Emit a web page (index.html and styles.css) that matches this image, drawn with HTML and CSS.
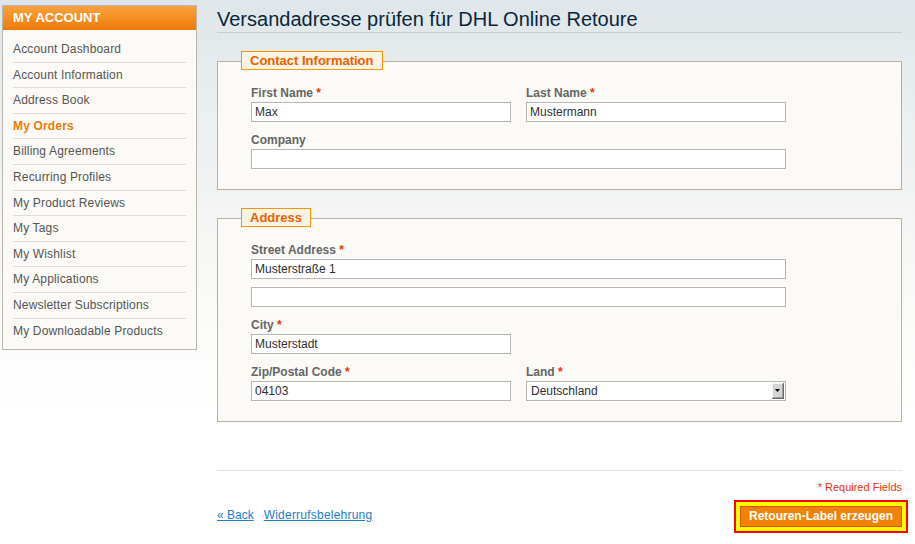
FILE: index.html
```html
<!DOCTYPE html>
<html lang="de">
<head>
<meta charset="utf-8">
<title>Versandadresse prüfen für DHL Online Retoure</title>
<link rel="stylesheet" href="styles.css">
</head>
<body>
<div class="page">
  <aside class="block-account">
    <div class="block-title">My Account</div>
    <ul class="block-content">
      <li><a href="#">Account Dashboard</a></li>
      <li><a href="#">Account Information</a></li>
      <li><a href="#">Address Book</a></li>
      <li class="current">My Orders</li>
      <li><a href="#">Billing Agreements</a></li>
      <li><a href="#">Recurring Profiles</a></li>
      <li><a href="#">My Product Reviews</a></li>
      <li><a href="#">My Tags</a></li>
      <li><a href="#">My Wishlist</a></li>
      <li><a href="#">My Applications</a></li>
      <li><a href="#">Newsletter Subscriptions</a></li>
      <li><a href="#">My Downloadable Products</a></li>
    </ul>
  </aside>
  <main class="main">
    <h1 class="page-title">Versandadresse prüfen für DHL Online Retoure</h1>

    <div class="fieldset">
      <h2 class="legend">Contact Information</h2>
      <ul class="form-list">
        <li class="fields">
          <div class="field">
            <label>First Name <em>*</em></label>
            <input class="input-text" type="text" value="Max">
          </div>
          <div class="field">
            <label>Last Name <em>*</em></label>
            <input class="input-text" type="text" value="Mustermann">
          </div>
        </li>
        <li>
          <label>Company</label>
          <input class="input-text wide" type="text" value="">
        </li>
      </ul>
    </div>

    <div class="fieldset">
      <h2 class="legend">Address</h2>
      <ul class="form-list">
        <li>
          <label>Street Address <em>*</em></label>
          <input class="input-text wide" type="text" value="Musterstraße 1">
        </li>
        <li>
          <input class="input-text wide" type="text" value="">
        </li>
        <li>
          <label>City <em>*</em></label>
          <input class="input-text" type="text" value="Musterstadt">
        </li>
        <li class="fields">
          <div class="field">
            <label>Zip/Postal Code <em>*</em></label>
            <input class="input-text" type="text" value="04103">
          </div>
          <div class="field">
            <label>Land <em>*</em></label>
            <div class="select-box">
              <select class="select">
                <option>Deutschland</option>
              </select>
              <svg class="select-arrow" width="12" height="16" viewBox="0 0 12 16" aria-hidden="true">
                <rect x="0" y="0" width="12" height="16" fill="#d4d4d4"/>
                <rect x="0" y="0" width="12" height="1" fill="#f4f4f4"/>
                <rect x="0" y="0" width="1" height="16" fill="#f4f4f4"/>
                <rect x="11" y="0" width="1" height="16" fill="#6a6a6a"/>
                <rect x="0" y="15" width="12" height="1" fill="#6a6a6a"/>
                <rect x="10" y="1" width="1" height="14" fill="#a0a0a0"/>
                <rect x="1" y="14" width="10" height="1" fill="#a0a0a0"/>
                <polygon points="3,6 8,6 5.5,9" fill="#000"/>
              </svg>
            </div>
          </div>
        </li>
      </ul>
    </div>

    <div class="buttons-set">
      <p class="required">* Required Fields</p>
      <div class="actions">
        <div class="links">
          <a href="#">« Back</a>
          <a href="#" class="wide-link">Widerrufsbelehrung</a>
        </div>
        <button class="button" type="button">Retouren-Label erzeugen</button>
      </div>
    </div>
  </main>
</div>
</body>
</html>
```

FILE: styles.css
```css
html {
  min-height: 100%;
  background: #fff;
}
body {
  margin: 0;
  min-height: 544px;
  font: 12px/1.5 "Liberation Sans", Arial, Helvetica, sans-serif;
  color: #2f2f2f;
  background: linear-gradient(180deg, #dfe6e9 0px, #e9eeee 100px, #f4f5f4 220px, #fbfbfa 330px, #ffffff 430px);
}
.page {
  display: flex;
  align-items: flex-start;
  gap: 20px;
  padding: 5px 0 0 2px;
  width: 900px;
}

/* Sidebar */
.block-account {
  flex: 0 0 195px;
  box-sizing: border-box;
  border: 1px solid #b9b6b1;
  background: #fbfaf6;
}
.block-title {
  height: 24px;
  line-height: 24px;
  padding: 0 10px;
  font-weight: bold;
  font-size: 13px;
  color: #fff;
  text-transform: uppercase;
  background: linear-gradient(180deg, #f9a23f 0%, #f38f21 50%, #ee7a04 100%);
}
.block-content {
  list-style: none;
  margin: 0;
  padding: 7px 10px 6px;
}
.block-content li {
  padding: 3px 0;
  line-height: 18.6px;
  border-bottom: 1px solid #dcdcdc;
  color: #555;
  letter-spacing: 0.16px;
}
.block-content li:last-child {
  border-bottom: 0;
}
.block-content li a {
  color: #555;
  text-decoration: none;
}
.block-content li.current {
  color: #ec7a08;
  font-weight: bold;
}

/* Main */
.main {
  flex: 0 0 685px;
  width: 685px;
}
.page-title {
  margin: 2px 0 0;
  font-size: 20px;
  font-weight: normal;
  line-height: 25px;
  color: #0a263c;
  border-bottom: 1px solid #cccccc;
}
.fieldset {
  margin-top: 28px;
  border: 1px solid #bbafa0;
  background: #fbfaf6;
  padding: 22px 25px 12px 33px;
}
.legend {
  display: table;
  margin: -33px 0 14px -10px;
  padding: 0 8px;
  border: 1px solid #f19900;
  background: #f9f3e3;
  color: #e76200;
  font-size: 13px;
  font-weight: bold;
  line-height: 17px;
}
.form-list {
  list-style: none;
  margin: 0;
  padding: 0;
}
.form-list > li {
  margin: 0 0 8px;
}
.fields {
  display: flex;
}
.field {
  width: 275px;
}
.form-list label {
  display: block;
  font-weight: bold;
  color: #666;
  line-height: 18px;
}
.form-list > li + li label {
  padding-top: 1px;
}
.form-list em {
  font-style: normal;
  color: #eb340a;
}
.input-text,
.select {
  display: block;
  box-sizing: border-box;
  width: 260px;
  height: 20px;
  margin: 0;
  padding: 0 3px;
  border: 1px solid #b6b6b6;
  background: #fff;
  font: 12px "Liberation Sans", Arial, Helvetica, sans-serif;
  color: #2f2f2f;
  border-radius: 0;
  outline: none;
}
.input-text.wide {
  width: 535px;
}
.select-box {
  position: relative;
  width: 260px;
}
.select {
  -webkit-appearance: none;
  appearance: none;
  padding: 0 4px;
}
.select-arrow {
  position: absolute;
  right: 2px;
  top: 2px;
  pointer-events: none;
}

/* Buttons */
.buttons-set {
  margin-top: 48px;
  padding-top: 8px;
  border-top: 1px solid #e4e4e4;
}
.buttons-set .required {
  margin: 0 0 10px;
  text-align: right;
  font-size: 11px;
  line-height: 16.5px;
  color: #eb340a;
}
.actions {
  display: flex;
  justify-content: space-between;
  align-items: flex-start;
}
.links {
  display: flex;
  gap: 10px;
  line-height: 18px;
}
.links a {
  color: #1e7ec8;
  text-decoration: underline;
}
.links .wide-link {
  letter-spacing: 0.22px;
}
.button {
  height: 21px;
  margin: 0;
  padding: 0 8px;
  border: 1px solid #de5400;
  background: #f18200;
  color: #fff;
  font: bold 12px/19px "Liberation Sans", Arial, Helvetica, sans-serif;
  box-shadow: 0 0 0 4px #ffff00, 0 0 0 6px #ff0000;
  cursor: pointer;
}
```
